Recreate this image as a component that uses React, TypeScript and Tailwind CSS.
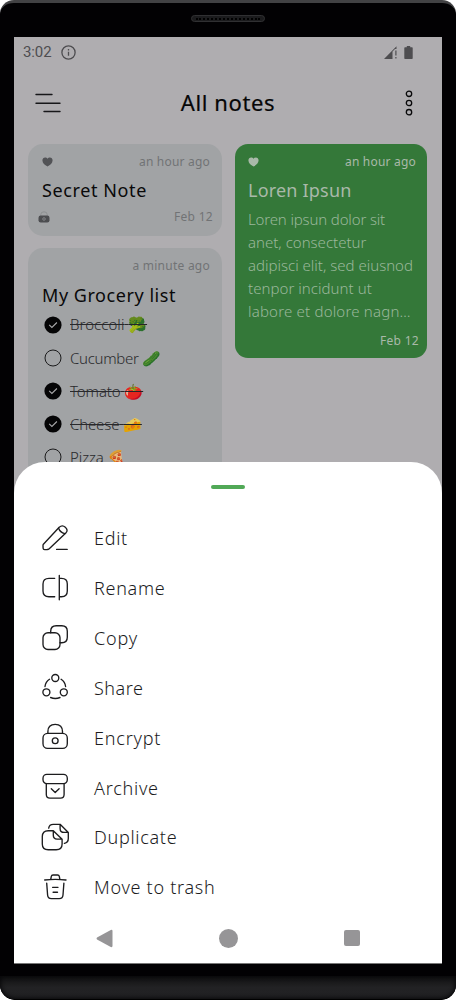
import React from "react";

type Item = { label: string; done: boolean; emoji: string; track: string };

const groceries: Item[] = [
  { label: "Broccoli", done: true, emoji: "🥦", track: "tracking-[0.05px]" },
  { label: "Cucumber", done: false, emoji: "🥒", track: "tracking-[-0.3px]" },
  { label: "Tomato", done: true, emoji: "🍅", track: "tracking-[-0.1px]" },
  { label: "Cheese", done: true, emoji: "🧀", track: "tracking-[-0.15px]" },
  { label: "Pizza", done: false, emoji: "🍕", track: "tracking-[-0.1px]" },
];

const actions: { label: string; track: string; icon: React.ReactNode }[] = [
  {
    label: "Edit",
    track: "tracking-[0.7px]",
    icon: (
      <>
        <path d="M3.4 21.2 19.2 4.3Q22.3 1.5 25.3 4.2 28.600 7.200 25.800 10L9.500 25.400Q8.500 26.400 7 26.500L4.600 26.600Q3.200 26.600 3.100 25.200L3 22.600Q3 21.700 3.400 21.200Z" />
        <path d="M18.600 5.200Q20 9.300 24.800 10.600M16.600 26.400h10.600" />
      </>
    ),
  },
  {
    label: "Rename",
    track: "tracking-[0.7px]",
    icon: <path d="M14.700 5.300H9Q3 5.300 3 11v7q0 5.700 6 5.700h5.700M19.300 2.500v24.300M19.300 5.300h2.200q5.800 0 5.800 5.700v7q0 5.700-5.800 5.700h-2.200" />,
  },
  {
    label: "Copy",
    track: "tracking-[0.8px]",
    icon: (
      <>
        <rect x="3" y="9.700" width="17" height="16.800" rx="5" />
        <path d="M10.700 9.700V8.200q0-5.500 5.500-5.500h5.600q5.500 0 5.500 5.500v6q0 5.500-5.500 5.500H20" />
      </>
    ),
  },
  {
    label: "Share",
    track: "tracking-[0.5px]",
    icon: (
      <>
        <circle cx="15.300" cy="6" r="3.500" />
        <circle cx="6.400" cy="20.300" r="3.500" />
        <circle cx="23.800" cy="20.300" r="3.500" />
        <path d="M9.500 7.300Q5.500 10 5 14.500M21.100 7.300q4 2.700 4.500 7.200M10.600 25.500q4.700 1.900 9.400 0" />
      </>
    ),
  },
  {
    label: "Encrypt",
    track: "tracking-[0.8px]",
    icon: (
      <>
        <rect x="3" y="11.400" width="24.300" height="15" rx="4.600" />
        <path d="M7.900 11.400V9.600q0-7.200 7.300-7.200t7.300 7.200v1.800" />
        <circle cx="15.200" cy="18.700" r="2.900" />
      </>
    ),
  },
  {
    label: "Archive",
    track: "tracking-[0.75px]",
    icon: (
      <>
        <rect x="3" y="2.400" width="24.300" height="9.200" rx="3.800" />
        <path d="M6.300 11.800v10.700q0 3.600 3.600 3.600h10.600q3.600 0 3.600-3.600V11.800M11.300 16.800l3.900 3.800 3.900-3.800" />
      </>
    ),
  },
  {
    label: "Duplicate",
    track: "tracking-[0.7px]",
    icon: (
      <>
        <path d="M13.300 8.700H8.200q-5.900 0-5.900 5.800v7.400q0 5.800 5.900 5.800h8q5.900 0 5.900-5.800v-4.700ZM13.300 8.900v4.400q0 3.800 3.800 3.800h4.900" />
        <path d="M8.700 6.200q.6-3.900 4.500-3.900h6.900l8.200 8.100v6q0 4-3.900 4.900M20.100 2.500v3.900q0 4 4 4h4.200" />
      </>
    ),
  },
  {
    label: "Move to trash",
    track: "tracking-[0.72px]",
    icon: (
      <path d="M4.700 8q10.500-1.300 21.300 0M10.800 7l.5-2.600Q11.600 3 13 3h4.600q1.400 0 1.700 1.400l.5 2.600M6.700 11.100 7.600 23q.2 3.600 3.800 3.600h7.800q3.600 0 3.800-3.600l.9-11.900M12.600 15.300h5.400M13.100 20.200h4.400" />
    ),
  },
];

const loremLines = [
  { text: "Loren ipsun dolor sit", track: "tracking-[-0.15px]" },
  { text: "anet, consectetur", track: "tracking-[0px]" },
  { text: "adipisci elit, sed eiusnod", track: "tracking-[0px]" },
  { text: "tenpor incidunt ut", track: "tracking-[0.05px]" },
  { text: "labore et dolore nagn…", track: "tracking-[0.2px]" },
];

const Heart = () => (
  <svg className="h-[10px] w-[11px]" viewBox="0 0 11 10" fill="currentColor">
    <path d="M5.500 9.600C2.800 8.200.4 6 .4 3.300.4 1.600 1.600.4 3.100.4c1 0 1.900.5 2.400 1.300C6 .9 6.900.4 7.900.4c1.500 0 2.700 1.200 2.700 2.900C10.600 6 8.200 8.200 5.500 9.600Z" />
  </svg>
);

const Check = ({ done }: { done: boolean }) => (
  <svg className="h-[18px] w-[18px] shrink-0" viewBox="0 0 18 18" fill="none">
    {done ? (
      <>
        <circle cx="9" cy="9" r="8.600" fill="#050506" />
        <path d="m5.200 8.900 2.700 2.600 5-5" stroke="#a9a9ab" strokeWidth="1.100" />
      </>
    ) : (
      <circle cx="9" cy="9" r="8" stroke="#1b1b1c" strokeWidth="1" />
    )}
  </svg>
);

const GreenNote = () => (
  <article className="h-[214px] w-[192px] rounded-[13px] bg-[#347839] pt-[10px] text-[#a9b9a9]">
    <div className="flex h-4 items-center justify-between pr-[11px] pl-[13px] text-[12px] tracking-[0.2px]">
      <Heart />
      <span>an hour ago</span>
    </div>
    <h2 className="mt-[7px] pl-[13px] text-[18px] leading-[26px] tracking-[0.2px]">Loren Ipsun</h2>
    <div className="mt-[5px] pl-[13px] text-[15px] leading-[23px] font-light text-[#9ab79b]">
      {loremLines.map((l) => (
        <p key={l.text} className={l.track}>{l.text}</p>
      ))}
    </div>
    <div className="mt-[10px] pr-2 text-right text-[12px] leading-4 tracking-[0.3px]">Feb 12</div>
  </article>
);

export default function App() {
  return (
    <div className="flex h-[1000px] w-[456px] flex-col overflow-hidden bg-white font-['Noto_Sans','Noto_Color_Emoji',sans-serif]">
      <div className="flex h-full flex-col overflow-hidden rounded-t-[14px] rounded-b-[15px] border-t-[3px] border-[#424244] bg-[#020103]">
        <div className="flex h-[34px] shrink-0 justify-center pt-[12px]">
          <div className="flex h-[7px] w-[74px] items-center rounded-full border border-[#303032] bg-[#1b1b1d] px-1">
            <div className="h-0 w-full border-t-2 border-dotted border-black" />
          </div>
        </div>
        <main className="relative mx-[14px] h-[927px] w-[428px] shrink-0 overflow-hidden border-b border-[#777] bg-[#afadb0]">
          <div className="flex h-[30px] items-center justify-between pr-[29px] pl-[9px] text-[#4e4d50]">
            <div className="flex items-center gap-[9px]">
              <span className="font-['Roboto',sans-serif] text-[15px] tracking-[-0.1px]">3:02</span>
              <svg className="h-[15px] w-[15px]" viewBox="0 0 15 15" fill="none" stroke="currentColor" strokeWidth="1.300">
                <circle cx="7.500" cy="7.500" r="6.600" />
                <path d="M7.500 6.700v4M7.500 4v1.400" />
              </svg>
            </div>
            <div className="flex items-center gap-[7px]">
              <svg className="h-[13px] w-[13px]" viewBox="0 0 13 13" fill="currentColor">
                <path d="M0 13 12.500.3V3H11L8.500 5.500V13ZM11.300 4.500h1.200v5h-1.200ZM11.300 11h1.200v1.600h-1.200Z" />
              </svg>
              <svg className="h-[13px] w-[9px]" viewBox="0 0 9 13" fill="currentColor">
                <path d="M2.800 0h3.400v1.300H8q.7 0 .7.700v10.200q0 .8-.7.800H1q-.7 0-.7-.8V2q0-.7.7-.7h1.800Z" />
              </svg>
            </div>
          </div>
          <header className="flex h-[77px] items-center justify-between pr-[29px] pb-[5px] pl-[21px]">
            <svg className="h-5 w-[26px]" viewBox="0 0 26 20" fill="none" stroke="#171719" strokeWidth="1.400" strokeLinecap="round">
              <path d="M1 1.500h16M1 10.300h24M9 18.500h16" />
            </svg>
            <h1 className="mr-[10px] mb-[2px] text-[22px] leading-[30px] tracking-[0.600px] text-[#060607] [-webkit-text-stroke:0.2px_#060607]">All notes</h1>
            <svg className="h-[26px] w-[8px]" viewBox="0 0 8 26" fill="none" stroke="#09090a" strokeWidth="1.300">
              <circle cx="4" cy="3.800" r="2.700" />
              <circle cx="4" cy="13" r="2.700" />
              <circle cx="4" cy="22.200" r="2.700" />
            </svg>
          </header>
          <section className="flex items-start gap-[13px] pl-[14px] whitespace-nowrap">
            <div className="flex w-[194px] flex-col gap-3">
              <article className="h-[92px] rounded-[15px] bg-[#a1a3a5] pt-[10px] text-[#717375]">
                <div className="flex h-4 items-center justify-between pr-3 pl-[14px] text-[12px] tracking-[0.200px]">
                  <span className="text-[#525356]"><Heart /></span>
                  <span>an hour ago</span>
                </div>
                <h2 className="mt-[7px] pl-[14px] text-[18px] leading-[26px] tracking-[0.600px] text-[#09090a]">Secret Note</h2>
                <div className="mt-[6px] flex h-4 items-center justify-between pr-[9px] pl-[10px] text-[12px] tracking-[0.300px]">
                  <svg className="h-3 w-3" viewBox="0 0 12 12" fill="none">
                    <path d="M2.800 5V3.500Q2.800.8 6 .8t3.200 2.700V5" stroke="#8b8d8f" strokeWidth=".9" />
                    <rect x=".5" y="4.500" width="11" height="7" rx="2.200" fill="#4c4d50" />
                    <circle cx="6" cy="8" r="1.300" stroke="#8b8d8f" strokeWidth=".8" />
                  </svg>
                  <span>Feb 12</span>
                </div>
              </article>
              <article className="h-[400px] rounded-[15px] bg-[#a1a3a5] pt-[10px]">
                <div className="pr-3 text-right text-[12px] leading-4 tracking-[0.250px] text-[#717375]">a minute ago</div>
                <h2 className="mt-2 pl-[14px] text-[18px] leading-[26px] tracking-[0.550px] text-[#09090a]">My Grocery list</h2>
                <ul>
                  {groceries.map((g) => (
                    <li key={g.label} className="flex h-[33.200px] items-center gap-2 pl-4">
                      <Check done={g.done} />
                      <span className={`text-[15px] font-light text-[#29292c] ${g.done ? "line-through" : ""}`}>
                        <span className={g.track}>{g.label}</span> <span className="brightness-90">{g.emoji}</span>
                      </span>
                    </li>
                  ))}
                </ul>
              </article>
            </div>
            <GreenNote />
          </section>
          <section className="absolute inset-x-0 top-[425px] bottom-0 flex flex-col rounded-t-[31px] bg-white">
            <div className="mx-auto mt-[23px] h-[4px] w-[34px] shrink-0 rounded-full bg-[#51a957]" />
            <ul className="mt-[25px]">
              {actions.map((a) => (
                <li key={a.label} className="flex h-[49.850px] items-center gap-[24px] pl-[26px] text-[#1c1c1e]">
                  <svg className="mb-[2px] h-[30px] w-[30px] shrink-0" viewBox="0 0 30 30" fill="none" stroke="currentColor" strokeWidth="1.350" strokeLinecap="round" strokeLinejoin="round">
                    {a.icon}
                  </svg>
                  <span className={`text-[18px] font-light ${a.track}`}>{a.label}</span>
                </li>
              ))}
            </ul>
            <nav className="mt-[16px] flex items-center justify-between pr-[82.500px] pl-[81.500px] text-[#969597]">
              <svg className="h-[19px] w-[17px]" viewBox="0 0 17 19" fill="currentColor">
                <path d="M1 8.500Q0 9.500 1 10.500L14.800 18q1.700.6 1.700-1V2q0-1.600-1.700-1Z" />
              </svg>
              <div className="h-[19px] w-[19px] rounded-full bg-[#969597]" />
              <div className="h-4 w-4 rounded-[2px] bg-[#969597]" />
            </nav>
          </section>
        </main>
        <div className="mt-[12px] flex-1 rounded-b-[15px] border-b border-black bg-linear-to-b from-[#101011] via-[#222224] to-[#212123] shadow-[inset_0_0_4px_1px_#08080a]" />
      </div>
    </div>
  );
}
